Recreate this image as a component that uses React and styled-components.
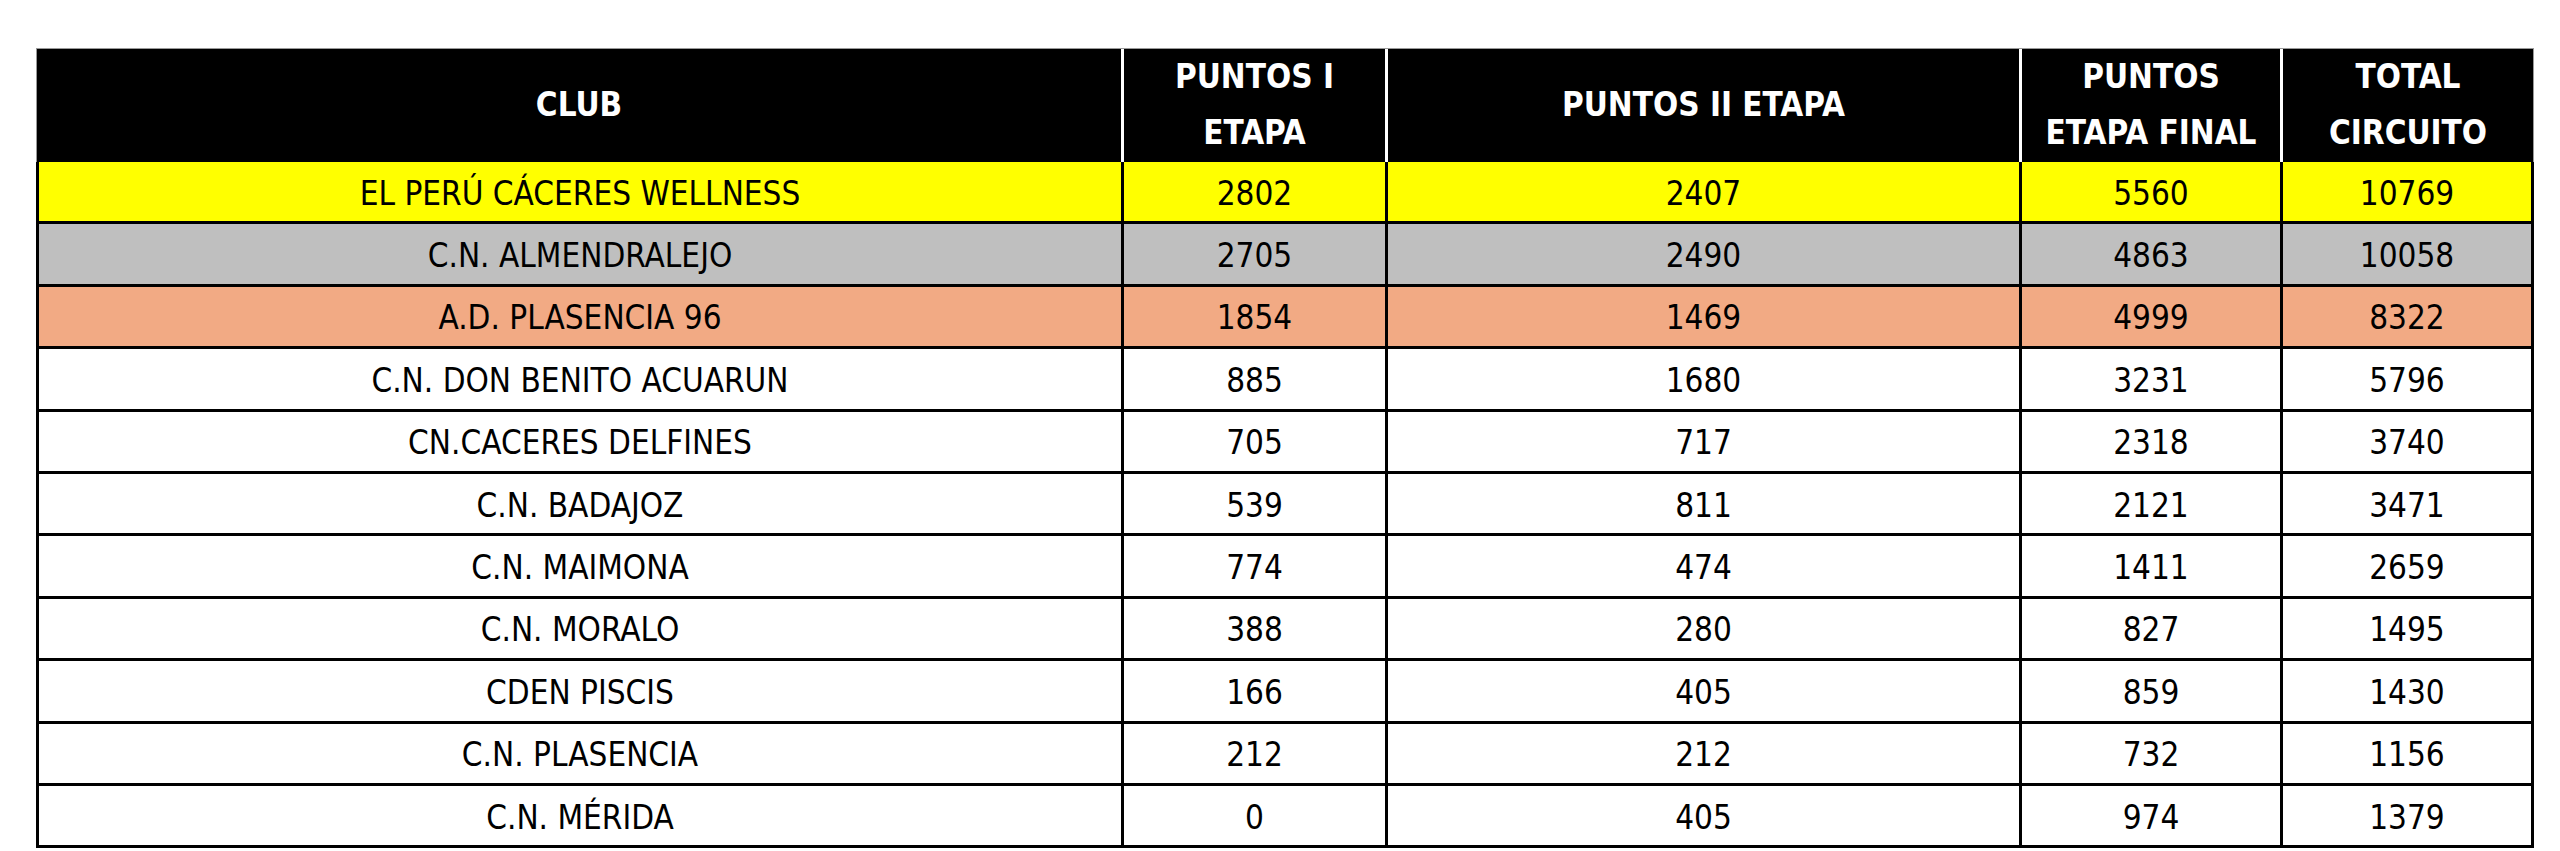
import styled, { createGlobalStyle } from "styled-components";

const GlobalStyle = createGlobalStyle`
  body {
    margin: 0;
    background: #fff;
  }
`;

const cols = "1085px 264px 634px 261px 254px";

const Page = styled.div`
  padding: 48px 26px 0 36px;
  font-family: "Liberation Sans Narrow", "Arial Narrow", "DejaVu Sans Condensed", sans-serif;
`;

const Board = styled.div`
  width: 2498px;
`;

const HeadRow = styled.div`
  display: grid;
  grid-template-columns: ${cols};
  height: 111px;
  background: #000;
  border-top: 1px solid #999;
  box-sizing: border-box;
`;

const HeadCell = styled.div`
  display: flex;
  align-items: center;
  justify-content: center;
  text-align: center;
  color: #fff;
  font-weight: 700;
  font-size: 33px;
  line-height: 56px;
  border-left: 3px solid #fff;
  padding-bottom: 2px;

  &:first-child {
    border-left: 1px solid #999;
  }
  &:last-child {
    border-right: 1px solid #999;
  }
`;

const Row = styled.div`
  display: grid;
  grid-template-columns: ${cols};
  height: 62.4px;
  background: ${(p) => p.$bg || "#fff"};
  border-top: 3px solid #000;
  box-sizing: border-box;

  &:last-child {
    height: 65.4px;
    border-bottom: 3px solid #000;
  }
`;

const Cell = styled.div`
  display: flex;
  align-items: center;
  justify-content: center;
  padding-top: 3px;
  font-size: 33px;
  color: #000;
  white-space: nowrap;
  border-left: 3px solid #000;

  &:last-child {
    border-right: 3px solid #000;
  }
`;

const colors = {
  gold: "#ffff00",
  silver: "#bfbfbf",
  bronze: "#f2aa84",
};

const rows = [
  ["EL PERÚ CÁCERES WELLNESS", 2802, 2407, 5560, 10769, "gold"],
  ["C.N. ALMENDRALEJO", 2705, 2490, 4863, 10058, "silver"],
  ["A.D. PLASENCIA 96", 1854, 1469, 4999, 8322, "bronze"],
  ["C.N. DON BENITO ACUARUN", 885, 1680, 3231, 5796],
  ["CN.CACERES DELFINES", 705, 717, 2318, 3740],
  ["C.N. BADAJOZ", 539, 811, 2121, 3471],
  ["C.N. MAIMONA", 774, 474, 1411, 2659],
  ["C.N. MORALO", 388, 280, 827, 1495],
  ["CDEN PISCIS", 166, 405, 859, 1430],
  ["C.N. PLASENCIA", 212, 212, 732, 1156],
  ["C.N. MÉRIDA", 0, 405, 974, 1379],
];

export default function App() {
  return (
    <Page>
      <GlobalStyle />
      <Board>
        <HeadRow>
          <HeadCell>CLUB</HeadCell>
          <HeadCell>PUNTOS I<br />ETAPA</HeadCell>
          <HeadCell>PUNTOS II ETAPA</HeadCell>
          <HeadCell>PUNTOS<br />ETAPA FINAL</HeadCell>
          <HeadCell>TOTAL<br />CIRCUITO</HeadCell>
        </HeadRow>
        {rows.map((r, i) => (
          <Row key={i} $bg={colors[r[5]]}>
            {r.slice(0, 5).map((v, j) => (
              <Cell key={j}>{v}</Cell>
            ))}
          </Row>
        ))}
      </Board>
    </Page>
  );
}
